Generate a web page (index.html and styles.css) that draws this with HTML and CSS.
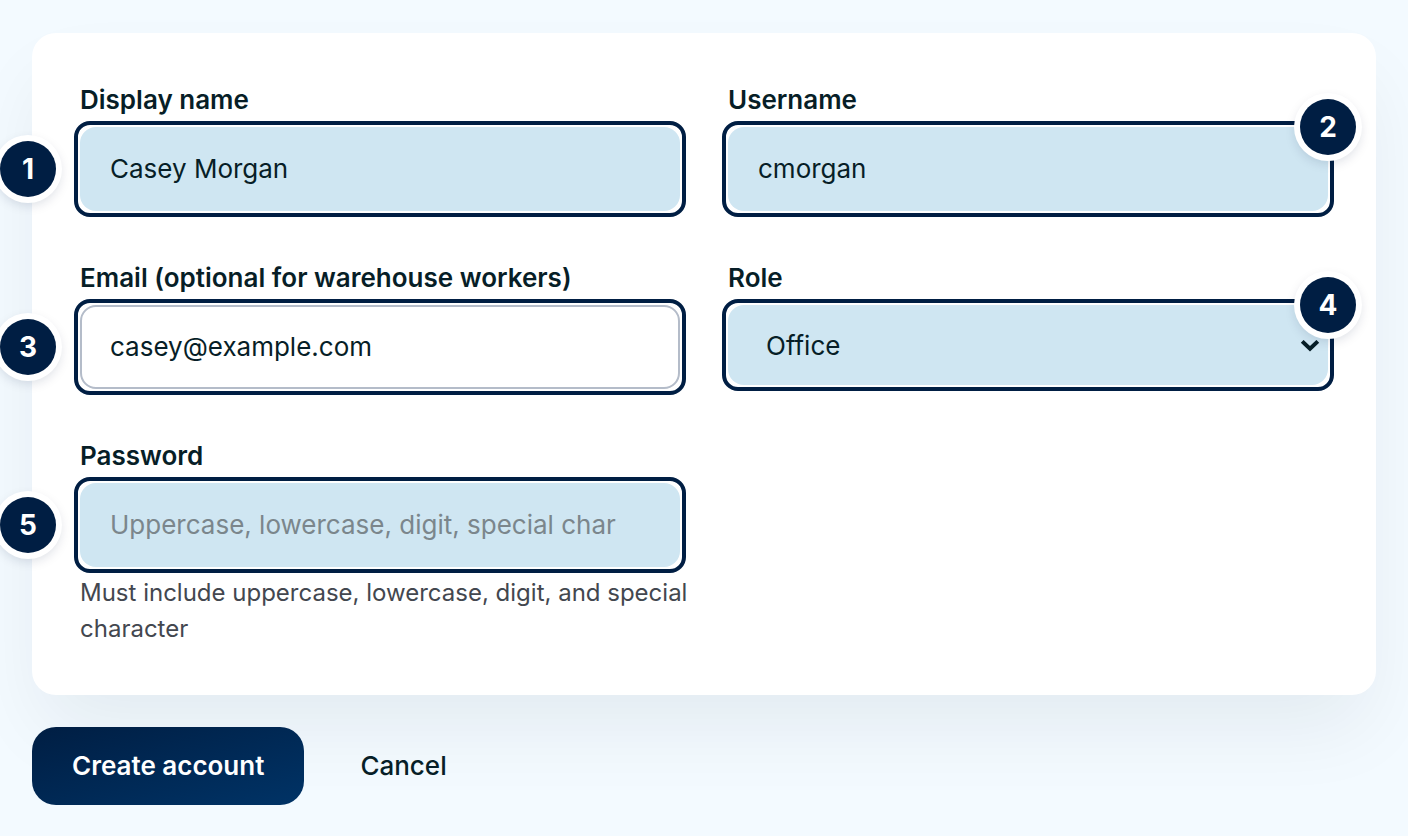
FILE: index.html
```html
<!DOCTYPE html>
<html lang="en">
<head>
    <meta charset="UTF-8">
    <meta name="viewport" content="width=device-width, initial-scale=1.0">
    <title>Create account</title>
    <link rel="stylesheet" href="styles.css">
</head>
<body>

<form class="account-form">
    <div class="card">
        <div class="field">
            <label for="display_name">Display name</label>
            <div class="control">
                <input type="text" id="display_name" name="display_name" value="Casey Morgan">
                <span class="badge badge-left">1</span>
            </div>
        </div>

        <div class="field">
            <label for="username">Username</label>
            <div class="control">
                <input type="text" id="username" name="username" value="cmorgan">
                <span class="badge badge-corner">2</span>
            </div>
        </div>

        <div class="field">
            <label for="email">Email (optional for warehouse workers)</label>
            <div class="control">
                <input class="plain" type="email" id="email" name="email" value="casey@example.com">
                <span class="badge badge-left">3</span>
            </div>
        </div>

        <div class="field">
            <label for="role">Role</label>
            <div class="control">
                <select id="role" name="role">
                    <option selected>Office</option>
                    <option>Warehouse</option>
                </select>
                <svg class="chevron" width="20" height="12" viewBox="0 0 20 12" aria-hidden="true">
                    <path d="M2.2 1.4 L10 8.8 L17.8 1.4" fill="none" stroke="currentColor" stroke-width="4"/>
                </svg>
                <span class="badge badge-corner">4</span>
            </div>
        </div>

        <div class="field">
            <label for="password">Password</label>
            <div class="control">
                <input type="password" id="password" name="password" placeholder="Uppercase, lowercase, digit, special char" aria-describedby="password_hint">
                <span class="badge badge-left">5</span>
            </div>
            <p class="hint" id="password_hint">Must include uppercase, lowercase, digit, and special character</p>
        </div>
    </div>

    <div class="actions">
        <button type="submit" class="btn btn-primary">Create account</button>
        <button type="button" class="btn btn-text">Cancel</button>
    </div>
</form>

</body>
</html>
```
FILE: styles.css
```css
* {
    box-sizing: border-box;
}
body {
    margin: 0;
    padding: 33px 32px;
    background: #f3faff;
    color: #071e27;
    font-family: Inter, sans-serif;
    font-size: 26px;
}
.card {
    display: grid;
    grid-template-columns: 1fr 1fr;
    gap: 48px;
    padding: 48px;
    background: #fff;
    border-radius: 24px;
    box-shadow: 0 40px 80px -10px rgba(7, 30, 39, 0.07);
}
.field {
    display: flex;
    flex-direction: column;
    gap: 8px;
}
label {
    font-weight: 600;
    line-height: 38px;
}
.control {
    position: relative;
}
/* highlight frame around each control */
.control::after {
    content: "";
    position: absolute;
    inset: -6px;
    border: 4px solid #001e43;
    border-radius: 16px;
    pointer-events: none;
}
input,
select {
    display: block;
    width: 100%;
    height: 84px;
    padding: 0 30px 2px;
    border: none;
    border-radius: 16px;
    background: #cfe6f2;
    color: #071e27;
    font: inherit;
}
input.plain {
    padding: 0 28px 2px;
    border: 2px solid #b4bcc9;
    background: #fff;
}
input::placeholder {
    color: #7b868c;
    opacity: 1;
}
select {
    appearance: none;
    height: 80px;
    padding: 0 38px;
}
.chevron {
    position: absolute;
    right: 8px;
    top: 35px;
    pointer-events: none;
}
.badge {
    position: absolute;
    z-index: 1;
    display: flex;
    align-items: center;
    justify-content: center;
    width: 56px;
    height: 56px;
    border-radius: 50%;
    background: #001e43;
    color: #fff;
    font-size: 28px;
    font-weight: 700;
    box-shadow: 0 0 0 6px #fff, 0 4px 12px 4px rgba(0, 30, 67, 0.15);
}
.badge-left {
    left: -80px;
    top: 14px;
}
.badge-corner {
    right: -28px;
    top: -28px;
}
.hint {
    margin: 0 -8px 0 0;
    color: #43474f;
    font-size: 24px;
    line-height: 36px;
}
.actions {
    position: relative;
    display: flex;
    gap: 16px;
    margin-top: 32px;
}
.btn {
    height: 78px;
    padding: 0 40px 2px;
    border: none;
    border-radius: 24px;
    background: none;
    color: #071e27;
    font: inherit;
    font-weight: 500;
    cursor: pointer;
}
.btn-primary {
    background: linear-gradient(to bottom right, #001e43, #003366);
    color: #fff;
    font-weight: 600;
}
```
